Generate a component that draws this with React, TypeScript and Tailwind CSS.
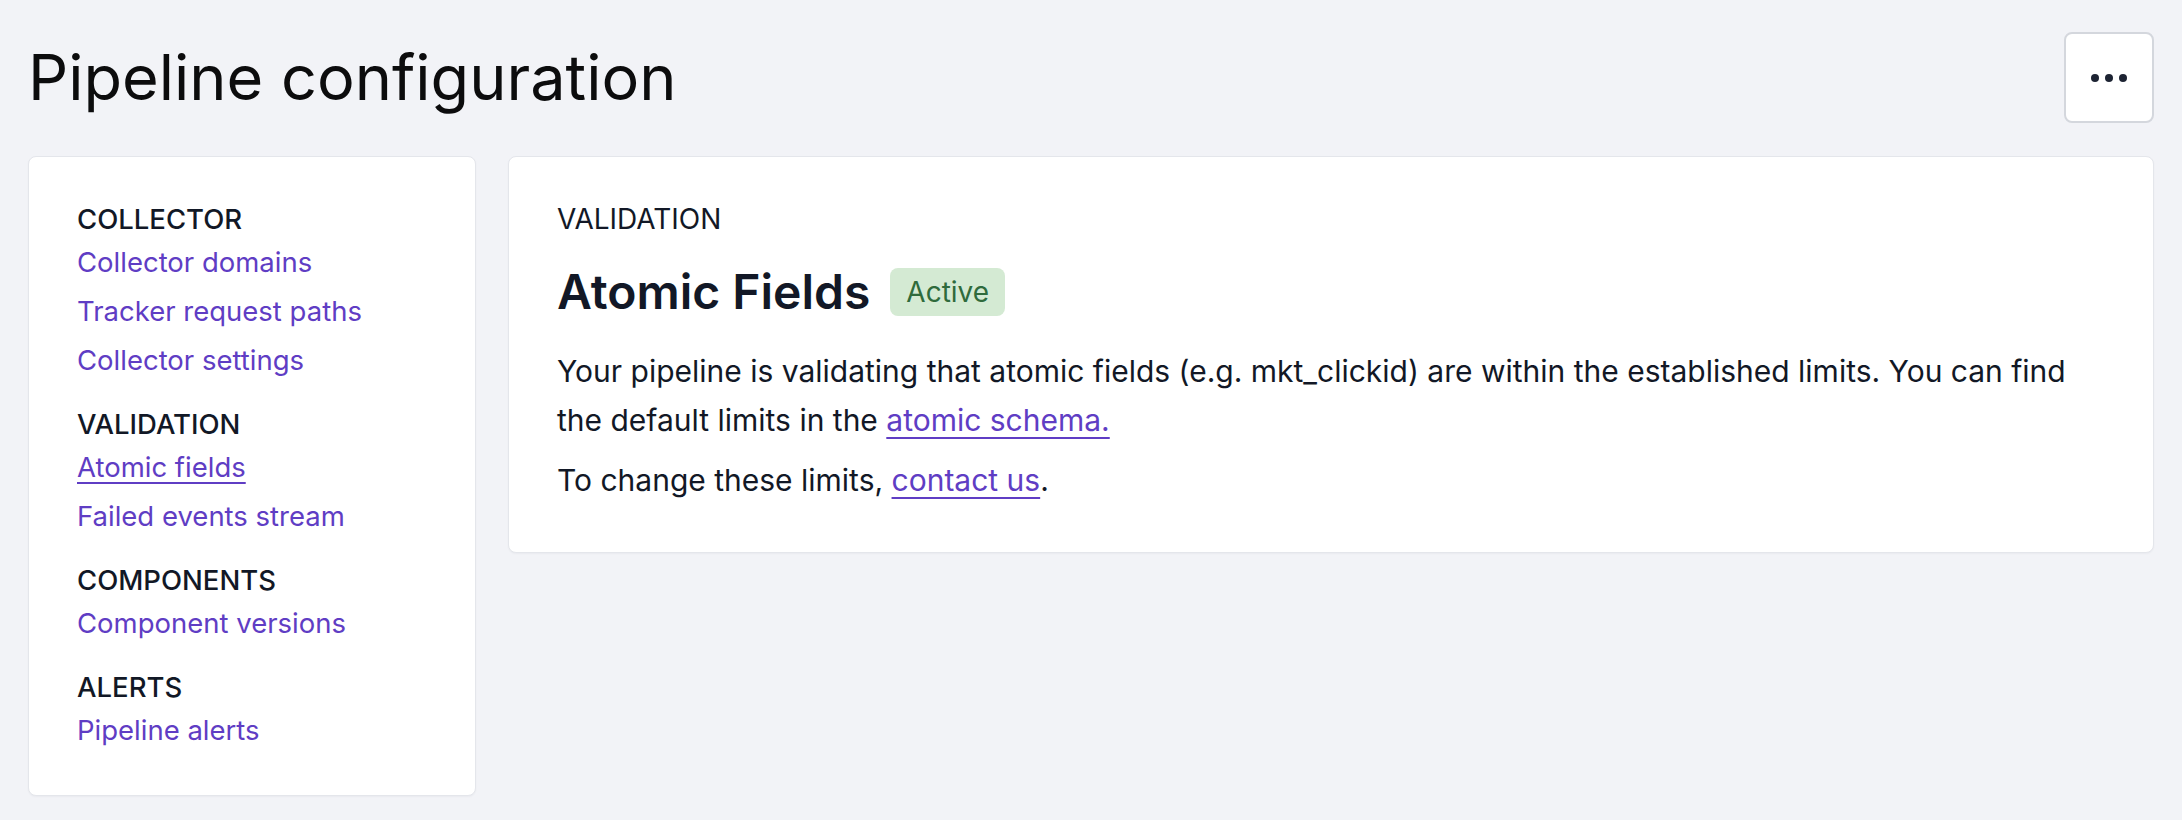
import React from "react";

const font = { fontFamily: "Inter, 'Noto Sans', sans-serif" };

interface NavGroup {
  title: string;
  links: { label: string; active?: boolean }[];
}

const groups: NavGroup[] = [
  {
    title: "COLLECTOR",
    links: [
      { label: "Collector domains" },
      { label: "Tracker request paths" },
      { label: "Collector settings" },
    ],
  },
  {
    title: "VALIDATION",
    links: [{ label: "Atomic fields", active: true }, { label: "Failed events stream" }],
  },
  { title: "COMPONENTS", links: [{ label: "Component versions" }] },
  { title: "ALERTS", links: [{ label: "Pipeline alerts" }] },
];

function Sidebar() {
  return (
    <nav className="w-[448px] shrink-0 rounded-lg border border-[#e4e6eb] bg-white px-[48px] pt-[41px] pb-[44px] shadow-[0_1px_2px_rgba(16,24,40,0.04)]">
      {groups.map((g, i) => (
        <div key={g.title} className={i === 0 ? "" : "mt-[22px]"}>
          <h3 className="text-[27.5px] leading-[43px] font-medium text-[#121826]">{g.title}</h3>
          <ul className="flex flex-col gap-[7px]">
            {g.links.map((l) => (
              <li key={l.label}>
                <a
                  href="#"
                  className={
                    "text-[27.5px] leading-[42px] text-[#5f3dc4] " +
                    (l.active ? "underline decoration-2 underline-offset-[5px]" : "")
                  }
                >
                  {l.label}
                </a>
              </li>
            ))}
          </ul>
        </div>
      ))}
    </nav>
  );
}

function MainCard() {
  return (
    <section className="flex-1 rounded-lg border border-[#e4e6eb] bg-white px-[48px] pt-[41px] pb-[47px] text-[#121826] shadow-[0_1px_2px_rgba(16,24,40,0.04)]">
      <div className="text-[28px] leading-[42px]">VALIDATION</div>
      <div className="mt-7 flex h-12 items-center gap-5">
        <h2 className="text-[48px] leading-none font-semibold">Atomic Fields</h2>
        <span className="flex h-12 items-center rounded-lg bg-[#d4ead3] px-4 text-[28px] text-[#2f6b3c]">
          Active
        </span>
      </div>
      <p className="mt-[31px] text-[30px] leading-[49px]">
        Your pipeline is validating that atomic fields (e.g. mkt_clickid) are within the established limits. You can
        find the default limits in the{" "}
        <a href="#" className="text-[#5f3dc4] underline decoration-2 underline-offset-[6px]">
          atomic schema.
        </a>
      </p>
      <p className="mt-[11px] text-[30px] leading-[49px]">
        To change these limits,{" "}
        <a href="#" className="text-[#5f3dc4] underline decoration-2 underline-offset-[6px]">
          contact us
        </a>
        .
      </p>
    </section>
  );
}

export default function App() {
  return (
    <div className="min-h-screen bg-[#f2f3f7] px-7" style={font}>
      <header className="flex items-center justify-between pt-8">
        <h1 className="text-[63px] leading-none text-[#0c0c0d]">Pipeline configuration</h1>
        <button className="flex h-[91px] w-[90px] items-center justify-center gap-[6px] rounded-lg border-2 border-[#d4d7dd] bg-white">
          <span className="h-2 w-2 rounded-full bg-[#1d2433]" />
          <span className="h-2 w-2 rounded-full bg-[#1d2433]" />
          <span className="h-2 w-2 rounded-full bg-[#1d2433]" />
        </button>
      </header>
      <div className="mt-[33px] flex items-start gap-8">
        <Sidebar />
        <MainCard />
      </div>
    </div>
  );
}
